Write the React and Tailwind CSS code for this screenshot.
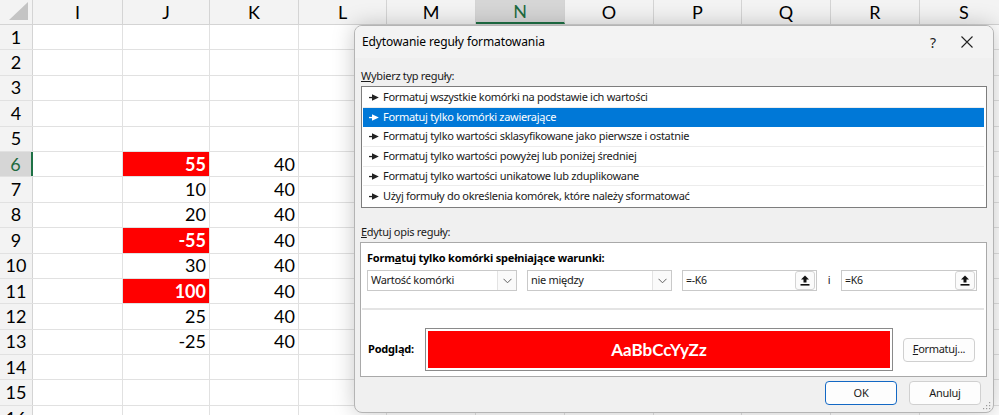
import React from "react";

const cols = [
  { label: "I", w: 90 },
  { label: "J", w: 87 },
  { label: "K", w: 89 },
  { label: "L", w: 88 },
  { label: "M", w: 89 },
  { label: "N", w: 89, active: true },
  { label: "O", w: 89 },
  { label: "P", w: 88 },
  { label: "Q", w: 89 },
  { label: "R", w: 89 },
  { label: "S", w: 89 },
];

// values for J and K, keyed by row
const data = {
  6: { j: "55", red: true, k: "40" },
  7: { j: "10", k: "40" },
  8: { j: "20", k: "40" },
  9: { j: "-55", red: true, k: "40" },
  10: { j: "30", k: "40" },
  11: { j: "100", red: true, k: "40" },
  12: { j: "25", k: "40" },
  13: { j: "-25", k: "40" },
};

const rules = [
  "Formatuj wszystkie komórki na podstawie ich wartości",
  "Formatuj tylko komórki zawierające",
  "Formatuj tylko wartości sklasyfikowane jako pierwsze i ostatnie",
  "Formatuj tylko wartości powyżej lub poniżej średniej",
  "Formatuj tylko wartości unikatowe lub zduplikowane",
  "Użyj formuły do określenia komórek, które należy sformatować",
];

const RuleArrow = ({ white }) => (
  <svg width="10" height="7" viewBox="0 0 10 7" className="shrink-0">
    <rect x="0" y="2.9" width="4" height="1.3" fill={white ? "#fff" : "#222"} />
    <path d="M3 0.2 L9.8 3.5 L3 6.8 Z" fill={white ? "#fff" : "#222"} />
  </svg>
);

const Chevron = () => (
  <div className="w-[19px] h-full border-l border-[#e3e3e3] bg-[#fafafa] flex items-center justify-center">
    <svg width="9" height="6" viewBox="0 0 9 6">
      <path d="M0.5 0.8 L4.5 4.8 L8.5 0.8" stroke="#606060" strokeWidth="1" fill="none" />
    </svg>
  </div>
);

const Collapse = () => (
  <div className="w-[20px] h-[19px] my-auto mr-[1px] border border-[#d4d4d4] rounded-[3px] bg-[#fbfbfb] flex items-center justify-center">
    <svg width="10" height="11" viewBox="0 0 10 11">
      <path d="M5 0.5 L9 4.5 L6.5 4.5 L6.5 7.5 L3.5 7.5 L3.5 4.5 L1 4.5 Z" fill="#111" />
      <rect x="0.5" y="9" width="9" height="1.6" fill="#111" />
    </svg>
  </div>
);

function Sheet() {
  const rows = Array.from({ length: 16 }, (_, i) => i + 1);
  return (
    <div className="font-['Lato',sans-serif] text-[18px] text-black">
      <div className="flex h-[25px] bg-[#f3f3f3] border-b border-[#d4d4d4]">
        <div className="w-[33px] shrink-0 border-r border-[#d4d4d4] relative">
          <svg width="20" height="19" viewBox="0 0 20 19" className="absolute right-[3px] bottom-[3px]">
            <path d="M19 0 L19 18 L0 18 Z" fill="#c4c4c4" />
          </svg>
        </div>
        {cols.map((c) => (
          <div
            key={c.label}
            style={{ width: c.w }}
            className={`shrink-0 flex items-center justify-center border-r border-[#d4d4d4] ${
              c.active ? "bg-[#d6d6d6] text-[#1e6b3f] border-b-2 border-b-[#1e7145]" : ""
            }`}
          >
            {c.label}
          </div>
        ))}
      </div>
      {rows.map((r) => {
        const d = data[r] || {};
        const active = r === 6;
        return (
          <div key={r} className="flex h-[25.4px] border-b border-[#e1e1e1]">
            <div
              className={`w-[33px] shrink-0 flex items-center justify-center border-r ${
                active
                  ? "bg-[#d6d6d6] text-[#1e6b3f] border-r-2 border-r-[#1e7145]"
                  : "bg-[#f3f3f3] border-[#d4d4d4]"
              }`}
            >
              {r}
            </div>
            {cols.map((c) => {
              let val = "";
              let red = false;
              if (c.label === "J") {
                val = d.j || "";
                red = d.red;
              }
              if (c.label === "K") val = d.k || "";
              return (
                <div
                  key={c.label}
                  style={{ width: c.w }}
                  className={`shrink-0 flex items-center justify-end pr-[3px] border-r border-[#e1e1e1] ${
                    red ? "bg-[#ff0000] text-white font-bold" : ""
                  }`}
                >
                  {val}
                </div>
              );
            })}
          </div>
        );
      })}
    </div>
  );
}

function Dialog() {
  return (
    <div className="absolute left-[354px] top-[25px] w-[640px] h-[388px] rounded-[8px] border border-[#b4b4b4] bg-[#f0f0f0] shadow-[0_0_22px_rgba(0,0,0,0.22)] overflow-hidden font-['Noto_Sans',sans-serif] text-[11px] tracking-[-0.3px] text-[#1a1a1a] flex flex-col">
      <div className="h-[32px] bg-[#f3f3f3] flex items-center pl-[7px] shrink-0">
        <span className="text-[12px] tracking-[-0.1px] text-black">Edytowanie reguły formatowania</span>
        <span className="ml-auto text-[14px] text-[#222] w-[20px] text-center">?</span>
        <div className="w-[48px] flex items-center justify-center mr-[2px]">
          <svg width="12" height="12" viewBox="0 0 12 12">
            <path d="M0.5 0.5 L11.5 11.5 M11.5 0.5 L0.5 11.5" stroke="#222" strokeWidth="1.1" />
          </svg>
        </div>
      </div>

      <div className="flex flex-col px-[6px]">
        <div className="mt-[11px] h-[15px] flex items-center">
          <span>
            <span className="underline">W</span>ybierz typ reguły:
          </span>
        </div>
        <div className="mt-[2px] h-[122px] border border-[#7d7d7d] bg-white pl-[1px] pr-[2px] py-[1px] flex flex-col">
          {rules.map((r, i) => {
            const sel = i === 1;
            return (
              <div
                key={r}
                className={`h-[19.8px] flex items-center gap-[4px] pl-[6px] ${
                  sel ? "bg-[#0078d7] text-white" : i < 5 ? "border-b border-[#ececec]" : ""
                }`}
              >
                <RuleArrow white={sel} />
                <span>{r}</span>
              </div>
            );
          })}
        </div>

        <div className="mt-[17px] h-[15px] flex items-center">
          <span>
            <span className="underline">E</span>dytuj opis reguły:
          </span>
        </div>
        <div className="mt-[2px] -ml-[1px] h-[135px] border border-[#a9a9a9] bg-white flex flex-col">
          <div className="px-[6px] pt-[7px]">
            <div className="h-[16px] flex items-center font-bold text-black tracking-[-0.2px]">
              <span>
                Form<span className="underline">a</span>tuj tylko komórki spełniające warunki:
              </span>
            </div>
            <div className="mt-[4px] h-[21px] flex items-stretch">
              <div className="w-[150px] border border-[#c9c9c9] flex items-center">
                <span className="pl-[3px] flex-1">Wartość komórki</span>
                <Chevron />
              </div>
              <div className="ml-[10px] w-[145px] border border-[#c9c9c9] flex items-center">
                <span className="pl-[3px] flex-1">nie między</span>
                <Chevron />
              </div>
              <div className="ml-[10px] w-[135px] border border-[#c9c9c9] flex items-center">
                <span className="pl-[3px] flex-1 text-[10.5px]">=-K6</span>
                <Collapse />
              </div>
              <div className="w-[24px] flex items-center justify-center">i</div>
              <div className="w-[136px] border border-[#c9c9c9] flex items-center">
                <span className="pl-[3px] flex-1 text-[10.5px]">=K6</span>
                <Collapse />
              </div>
            </div>
          </div>
          <div className="mt-[17px] mx-[1px] mr-[2px] h-[2px] bg-[#e4e4e4]" />
          <div className="flex items-center pl-[7px] mt-[18px]">
            <div className="w-[57px] font-bold text-black tracking-[-0.2px]">Podgląd:</div>
            <div className="w-[468px] h-[43px] border border-[#8a8a8a] p-[2px]">
              <div className="w-full h-full bg-[#ff0000] flex items-center justify-center font-['Lato',sans-serif] font-bold text-[17px] tracking-normal text-white">
                AaBbCcYyZz
              </div>
            </div>
            <button className="ml-[10px] w-[72px] h-[24px] rounded-[4px] border border-[#d0d0d0] bg-[#fdfdfd] text-[11px]">
              <span className="underline">F</span>ormatuj...
            </button>
          </div>
        </div>

        <div className="mt-[4px] flex justify-end pr-[6px] gap-[12px]">
          <button className="w-[72px] h-[24px] rounded-[4px] border-[1.5px] border-[#1368c4] bg-[#fdfdfd]">
            OK
          </button>
          <button className="w-[72px] h-[24px] rounded-[4px] border border-[#d0d0d0] bg-[#fdfdfd]">
            Anuluj
          </button>
        </div>
      </div>
      <svg width="9" height="9" viewBox="0 0 9 9" className="absolute right-[2px] bottom-[2px]">
        <rect x="7" y="1" width="1.2" height="1.2" fill="#9a9a9a" />
        <rect x="4" y="4" width="1.2" height="1.2" fill="#9a9a9a" />
        <rect x="7" y="4" width="1.2" height="1.2" fill="#9a9a9a" />
        <rect x="1" y="7" width="1.2" height="1.2" fill="#9a9a9a" />
        <rect x="4" y="7" width="1.2" height="1.2" fill="#9a9a9a" />
        <rect x="7" y="7" width="1.2" height="1.2" fill="#9a9a9a" />
      </svg>
    </div>
  );
}

export default function App() {
  return (
    <div className="relative w-[999px] h-[415px] overflow-hidden bg-white">
      <Sheet />
      <Dialog />
    </div>
  );
}
